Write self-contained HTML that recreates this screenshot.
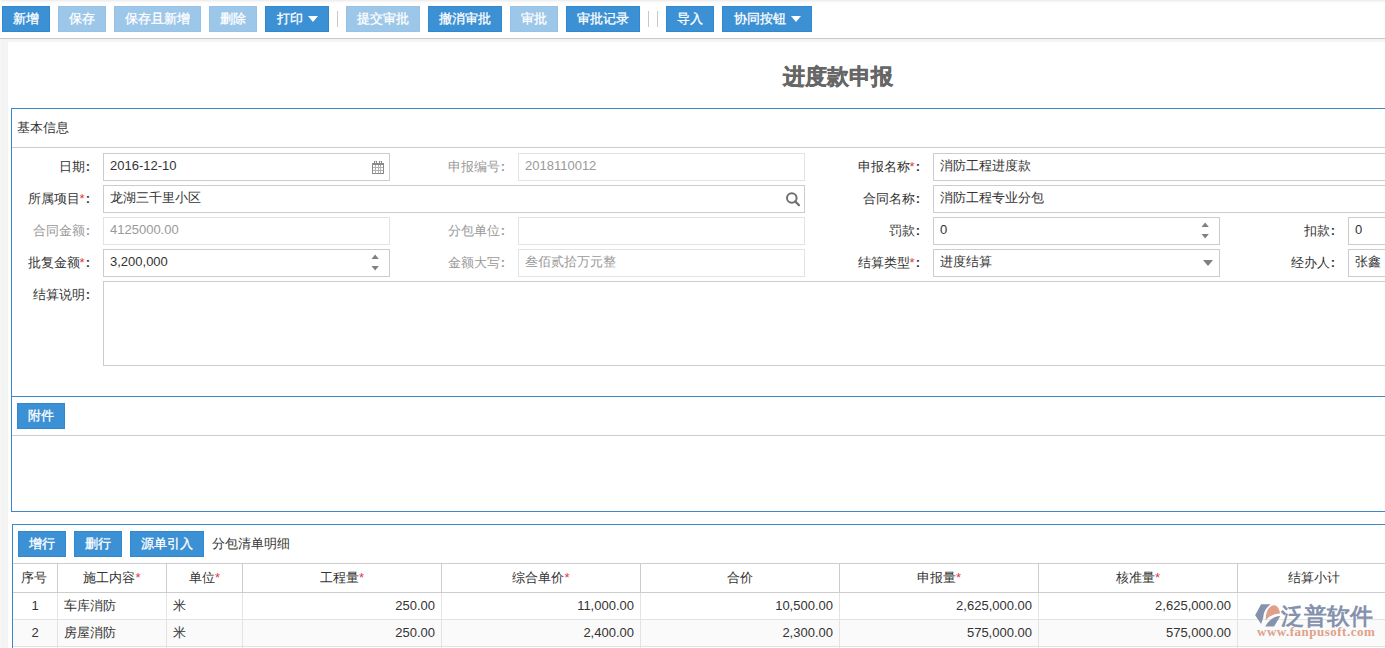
<!DOCTYPE html>
<html><head><meta charset="utf-8">
<style>
*{box-sizing:border-box;margin:0;padding:0}
html,body{width:1385px;height:648px;overflow:hidden}
body{position:relative;background:#f4f4f4;font-family:"Liberation Sans",sans-serif;font-size:13px;color:#333}
.a{position:absolute}
#tb{left:0;top:0;width:1385px;height:38px;background:linear-gradient(#ebebeb 0px,#fafafa 2px,#fff 4px)}
#tbl{left:0;top:38px;width:1385px;height:1px;background:#c8c8c8}
.btn{position:absolute;top:6px;height:26px;background:#3c90d4;border:1px solid #3088d1;color:#fff;-webkit-text-stroke:0.3px #fff;font-size:13px;line-height:23px;text-align:center;white-space:nowrap}
.dis{opacity:.5}
.sep{position:absolute;top:11px;width:1px;height:16px;background:#c8c8c8}
.car{display:inline-block;width:0;height:0;border-left:5px solid transparent;border-right:5px solid transparent;border-top:6px solid #fff;vertical-align:middle;margin-left:5px;margin-top:-2px}
#page{left:8px;top:42px;width:1377px;height:606px;background:#fff}
.panel{position:absolute;border:1px solid #3a87c9;background:#fff}
.hl{position:absolute;height:1px;background:#ccc}
.lbl{position:absolute;text-align:right;white-space:nowrap;line-height:27px;height:28px}
.inp{position:absolute;height:28px;border:1px solid #ccc;background:#fff;padding-left:6px;line-height:24px;white-space:nowrap;overflow:hidden}
.dl{color:#999}
.di{border-color:#e3e3e3;color:#999}
.req{color:#e4393c}
.co{font-style:normal;margin-left:1px;font-weight:bold}
.th{top:564px;height:28px;line-height:28px;text-align:center;white-space:nowrap}
.td{height:26px;line-height:25px;padding:0 6px;white-space:nowrap}
</style></head><body>
<div id="tb" class="a"></div>
<div id="tbl" class="a"></div>
<div class="btn" style="left:2px;width:48px">新增</div>
<div class="btn dis" style="left:58px;width:48px">保存</div>
<div class="btn dis" style="left:114px;width:87px">保存且新增</div>
<div class="btn dis" style="left:209px;width:48px">删除</div>
<div class="btn" style="left:265px;width:64px">打印<span class="car"></span></div>
<div class="sep" style="left:337px"></div>
<div class="btn dis" style="left:346px;width:74px">提交审批</div>
<div class="btn" style="left:428px;width:74px">撤消审批</div>
<div class="btn dis" style="left:510px;width:48px">审批</div>
<div class="btn" style="left:566px;width:74px">审批记录</div>
<div class="sep" style="left:648px"></div>
<div class="sep" style="left:657px"></div>
<div class="btn" style="left:666px;width:48px">导入</div>
<div class="btn" style="left:722px;width:90px">协同按钮<span class="car"></span></div>

<div id="page" class="a"></div>
<div class="a" style="left:0;top:39px;width:1px;height:609px;background:#f8f8f8"></div>
<div class="a" style="left:0;top:0;width:1px;height:37px;background:#fbfbfb"></div>
<div class="a" style="left:783px;top:62px;font-size:22px;font-weight:bold;color:#666;line-height:30px;-webkit-text-stroke:0.4px #666">进度款申报</div>

<!-- panel 1 -->
<div class="panel" style="left:11px;top:108px;width:1400px;height:404px"></div>
<div class="a" style="left:17px;top:119px;line-height:18px">基本信息</div>
<div class="hl" style="left:12px;top:147px;width:1380px"></div>

<div class="lbl" style="left:-30px;top:153px;width:120px">日期<i class="co">:</i></div>
<div class="inp" style="left:103px;top:153px;width:287px">2016-12-10</div>
<div class="lbl dl" style="left:385px;top:153px;width:120px">申报编号<i class="co">:</i></div>
<div class="inp di" style="left:518px;top:153px;width:287px">2018110012</div>
<div class="lbl" style="left:800px;top:153px;width:120px">申报名称<span class="req">*</span><i class="co">:</i></div>
<div class="inp" style="left:933px;top:153px;width:600px">消防工程进度款</div>

<div class="lbl" style="left:-30px;top:185px;width:120px">所属项目<span class="req">*</span><i class="co">:</i></div>
<div class="inp" style="left:103px;top:185px;width:702px">龙湖三千里小区</div>
<div class="lbl" style="left:800px;top:185px;width:120px">合同名称<i class="co">:</i></div>
<div class="inp" style="left:933px;top:185px;width:600px">消防工程专业分包</div>

<div class="lbl dl" style="left:-30px;top:217px;width:120px">合同金额<i class="co">:</i></div>
<div class="inp di" style="left:103px;top:217px;width:287px">4125000.00</div>
<div class="lbl dl" style="left:385px;top:217px;width:120px">分包单位<i class="co">:</i></div>
<div class="inp di" style="left:518px;top:217px;width:287px"></div>
<div class="lbl" style="left:800px;top:217px;width:120px">罚款<i class="co">:</i></div>
<div class="inp" style="left:933px;top:217px;width:287px">0</div>
<div class="lbl" style="left:1215px;top:217px;width:120px">扣款<i class="co">:</i></div>
<div class="inp" style="left:1348px;top:217px;width:287px">0</div>

<div class="lbl" style="left:-30px;top:249px;width:120px">批复金额<span class="req">*</span><i class="co">:</i></div>
<div class="inp" style="left:103px;top:249px;width:287px">3,200,000</div>
<div class="lbl dl" style="left:385px;top:249px;width:120px">金额大写<i class="co">:</i></div>
<div class="inp di" style="left:518px;top:249px;width:287px">叁佰贰拾万元整</div>
<div class="lbl" style="left:800px;top:249px;width:120px">结算类型<span class="req">*</span><i class="co">:</i></div>
<div class="inp" style="left:933px;top:249px;width:287px">进度结算</div>
<div class="lbl" style="left:1215px;top:249px;width:120px">经办人<i class="co">:</i></div>
<div class="inp" style="left:1348px;top:249px;width:287px">张鑫</div>

<div class="lbl" style="left:-30px;top:281px;width:120px">结算说明<i class="co">:</i></div>
<div class="inp" style="left:103px;top:281px;width:1400px;height:85px"></div>

<div class="a" style="left:11px;top:396px;width:1390px;height:1px;background:#3a87c9"></div>
<div class="btn" style="left:17px;top:403px;width:48px">附件</div>
<div class="hl" style="left:12px;top:435px;width:1380px"></div>


<svg class="a" style="left:371px;top:160px" width="14" height="15" shape-rendering="crispEdges">
<g fill="#8a8a8a"><rect x="1" y="3" width="12" height="2"/><rect x="1" y="5" width="1" height="9"/><rect x="12" y="5" width="1" height="9"/>
<rect x="1" y="13" width="12" height="1"/><rect x="3" y="1" width="1" height="2"/><rect x="5" y="1" width="1" height="2"/><rect x="8" y="1" width="1" height="2"/><rect x="10" y="1" width="1" height="2"/></g>
<g fill="#b0b0b0"><rect x="2" y="7" width="10" height="1"/><rect x="2" y="10" width="10" height="1"/>
<rect x="4" y="5" width="1" height="8"/><rect x="7" y="5" width="1" height="8"/><rect x="9" y="5" width="1" height="8"/></g>
<g fill="#c8c8c8"><rect x="4" y="1" width="1" height="1"/><rect x="9" y="1" width="1" height="1"/></g>
</svg>
<svg class="a" style="left:784px;top:190px" width="20" height="20">
<circle cx="7.8" cy="8" r="4.8" fill="none" stroke="#707070" stroke-width="2"/>
<line x1="11.2" y1="11.4" x2="15" y2="15.2" stroke="#707070" stroke-width="2.2" stroke-linecap="round"/>
</svg>
<svg class="a" style="left:370px;top:252px" width="10" height="20" fill="#808080">
<path d="M1.5 7h7.3L5.15 2.4z"/><path d="M1.5 14h7.3L5.15 18.6z"/>
</svg>
<svg class="a" style="left:1200px;top:220px" width="10" height="20" fill="#808080">
<path d="M1.5 7h7.3L5.15 2.4z"/><path d="M1.5 14h7.3L5.15 18.6z"/>
</svg>
<svg class="a" style="left:1203px;top:260px" width="10" height="6" fill="#808080">
<path d="M0 0h10L5 6z"/>
</svg>
<!-- panel 2 -->
<div class="panel" style="left:12px;top:524px;width:1400px;height:200px"></div>
<div class="btn" style="left:18px;top:531px;width:48px">增行</div>
<div class="btn" style="left:74px;top:531px;width:48px">删行</div>
<div class="btn" style="left:130px;top:531px;width:74px">源单引入</div>
<div class="a" style="left:212px;top:531px;line-height:26px">分包清单明细</div>
<div class="a" style="left:13px;top:563px;width:1400px;height:1px;background:#ccc"></div>
<div class="a" style="left:13px;top:592px;width:1400px;height:1px;background:#ccc"></div>
<div class="a" style="left:13px;top:620px;width:1400px;height:26px;background:#fafafa"></div>
<div class="a" style="left:13px;top:619px;width:1400px;height:1px;background:#e3e3e3"></div>
<div class="a" style="left:13px;top:646px;width:1400px;height:1px;background:#e3e3e3"></div>
<div class="a" style="left:57px;top:563px;width:1px;height:30px;background:#ccc"></div>
<div class="a" style="left:57px;top:593px;width:1px;height:60px;background:#e3e3e3"></div>
<div class="a" style="left:166px;top:563px;width:1px;height:30px;background:#ccc"></div>
<div class="a" style="left:166px;top:593px;width:1px;height:60px;background:#e3e3e3"></div>
<div class="a" style="left:242px;top:563px;width:1px;height:30px;background:#ccc"></div>
<div class="a" style="left:242px;top:593px;width:1px;height:60px;background:#e3e3e3"></div>
<div class="a" style="left:441px;top:563px;width:1px;height:30px;background:#ccc"></div>
<div class="a" style="left:441px;top:593px;width:1px;height:60px;background:#e3e3e3"></div>
<div class="a" style="left:640px;top:563px;width:1px;height:30px;background:#ccc"></div>
<div class="a" style="left:640px;top:593px;width:1px;height:60px;background:#e3e3e3"></div>
<div class="a" style="left:839px;top:563px;width:1px;height:30px;background:#ccc"></div>
<div class="a" style="left:839px;top:593px;width:1px;height:60px;background:#e3e3e3"></div>
<div class="a" style="left:1038px;top:563px;width:1px;height:30px;background:#ccc"></div>
<div class="a" style="left:1038px;top:593px;width:1px;height:60px;background:#e3e3e3"></div>
<div class="a" style="left:1237px;top:563px;width:1px;height:30px;background:#ccc"></div>
<div class="a" style="left:1237px;top:593px;width:1px;height:60px;background:#e3e3e3"></div>
<div class="th a" style="left:12px;width:43px">序号</div>
<div class="th a" style="left:58px;width:108px">施工内容<span class="req">*</span></div>
<div class="th a" style="left:167px;width:75px">单位<span class="req">*</span></div>
<div class="th a" style="left:243px;width:198px">工程量<span class="req">*</span></div>
<div class="th a" style="left:442px;width:198px">综合单价<span class="req">*</span></div>
<div class="th a" style="left:641px;width:198px">合价</div>
<div class="th a" style="left:840px;width:198px">申报量<span class="req">*</span></div>
<div class="th a" style="left:1039px;width:198px">核准量<span class="req">*</span></div>
<div class="th a" style="left:1238px;width:152px">结算小计</div>
<div class="td a" style="left:13px;top:593px;width:44px;text-align:center">1</div>
<div class="td a" style="left:58px;top:593px;width:108px;text-align:left">车库消防</div>
<div class="td a" style="left:167px;top:593px;width:75px;text-align:left">米</div>
<div class="td a" style="left:243px;top:593px;width:198px;text-align:right">250.00</div>
<div class="td a" style="left:442px;top:593px;width:198px;text-align:right">11,000.00</div>
<div class="td a" style="left:641px;top:593px;width:198px;text-align:right">10,500.00</div>
<div class="td a" style="left:840px;top:593px;width:198px;text-align:right">2,625,000.00</div>
<div class="td a" style="left:1039px;top:593px;width:198px;text-align:right">2,625,000.00</div>
<div class="td a" style="left:1238px;top:593px;width:198px;text-align:right"></div>
<div class="td a" style="left:13px;top:620px;width:44px;text-align:center">2</div>
<div class="td a" style="left:58px;top:620px;width:108px;text-align:left">房屋消防</div>
<div class="td a" style="left:167px;top:620px;width:75px;text-align:left">米</div>
<div class="td a" style="left:243px;top:620px;width:198px;text-align:right">250.00</div>
<div class="td a" style="left:442px;top:620px;width:198px;text-align:right">2,400.00</div>
<div class="td a" style="left:641px;top:620px;width:198px;text-align:right">2,300.00</div>
<div class="td a" style="left:840px;top:620px;width:198px;text-align:right">575,000.00</div>
<div class="td a" style="left:1039px;top:620px;width:198px;text-align:right">575,000.00</div>
<div class="td a" style="left:1238px;top:620px;width:198px;text-align:right"></div>

<svg class="a" style="left:1250px;top:600px" width="32" height="28">
<path fill="#8592ad" d="M11.1 4.2H20.8C16 7.5 13.6 12 13.3 17.5L11.1 24.1L5.1 15.3Z"/>
<path fill="#e0a088" d="M15.7 20.4C15.6 12 18.8 5.6 24 5.3C27.2 5.2 29.6 9.5 30.1 13.4C24.5 13.6 19.5 15.8 15.7 20.4Z"/>
<path fill="#8592ad" d="M15.3 26.4H24.1L30.3 16C24.5 16.2 18.8 19.5 15.3 26.4Z"/>
</svg>
<div class="a" style="left:1281px;top:600px;font-size:23px;line-height:32px;color:#8592ad;white-space:nowrap;font-weight:bold">泛普软件</div>
<div class="a" id="wmu" style="left:1257px;top:624px;font-family:'Liberation Serif',serif;font-size:13px;line-height:16px;color:#e0a088;white-space:nowrap;letter-spacing:0.5px;font-weight:bold">www.fanpusoft.com</div>
</body></html>
